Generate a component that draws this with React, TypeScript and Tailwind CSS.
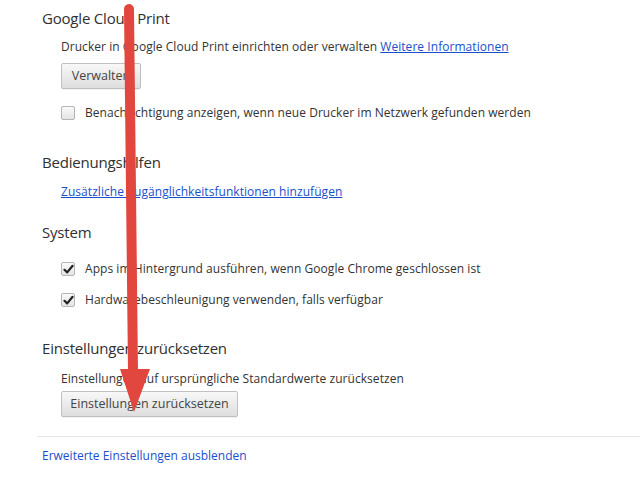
import React from "react";

function Checkbox({ checked }: { checked?: boolean }) {
  return (
    <div className="relative w-[14px] h-[14px] shrink-0 rounded-[2px] border border-[#b5b5b5] bg-gradient-to-b from-[#fafafa] to-[#e4e4e4]">
      {checked && (
        <svg className="absolute left-[1px] top-[1px]" width="11" height="11" viewBox="0 0 11 11">
          <path d="M1.5 5.8 L4.2 8.4 L9.6 1.8" fill="none" stroke="#222" strokeWidth="2.2" strokeLinecap="round" strokeLinejoin="round" />
        </svg>
      )}
    </div>
  );
}

function Button({ children, w }: { children: React.ReactNode; w: string }) {
  return (
    <div className={`${w} h-[26px] flex items-center justify-center rounded-[2px] border border-[#c0c0c0] bg-gradient-to-b from-[#f8f8f8] to-[#dedede] text-[12.5px] text-[#444] shadow-[0_1px_0_rgba(0,0,0,0.06)]`}>
      {children}
    </div>
  );
}

export default function App() {
  return (
    <div className="relative w-[640px] h-[485px] bg-white overflow-hidden text-[#333]" style={{ fontFamily: '"Open Sans", "Noto Sans", sans-serif' }}>
      <div className="pl-[42px] pt-[7px]">
        <div className="text-[15px] leading-[22px] tracking-[-0.2px] text-[#303030]">Google Cloud Print</div>
        <div className="pl-[19px]">
          <div className="mt-[10px] text-[12px] leading-[16px] tracking-[0.05px]">
            Drucker in Google Cloud Print einrichten oder verwalten{" "}
            <span className="text-[#1a4fcc] underline">Weitere Informationen</span>
          </div>
          <div className="mt-[8px]">
            <Button w="w-[80px]">Verwalten</Button>
          </div>
          <div className="mt-[16px] flex items-center gap-[10px] text-[12px] leading-[16px] tracking-[0.05px]">
            <Checkbox />
            <span>Benachrichtigung anzeigen, wenn neue Drucker im Netzwerk gefunden werden</span>
          </div>
        </div>

        <div className="mt-[30px] text-[15px] leading-[22px] tracking-[-0.2px] text-[#303030]">Bedienungshilfen</div>
        <div className="pl-[19px] mt-[11px] text-[12px] leading-[16px] tracking-[0.05px]">
          <span className="text-[#1a4fcc] underline">Zusätzliche Zugänglichkeitsfunktionen hinzufügen</span>
        </div>

        <div className="mt-[21px] text-[15px] leading-[22px] tracking-[-0.2px] text-[#303030]">System</div>
        <div className="pl-[19px]">
          <div className="mt-[18px] flex items-center gap-[10px] text-[12px] leading-[16px] tracking-[0.05px]">
            <Checkbox checked />
            <span>Apps im Hintergrund ausführen, wenn Google Chrome geschlossen ist</span>
          </div>
          <div className="mt-[15px] flex items-center gap-[10px] text-[12px] leading-[16px] tracking-[0.05px]">
            <Checkbox checked />
            <span>Hardwarebeschleunigung verwenden, falls verfügbar</span>
          </div>
        </div>

        <div className="mt-[29px] text-[15px] leading-[22px] tracking-[-0.2px] text-[#303030]">Einstellungen zurücksetzen</div>
        <div className="pl-[19px]">
          <div className="mt-[12px] text-[12px] leading-[16px] tracking-[0.05px]">
            Einstellungen auf ursprüngliche Standardwerte zurücksetzen
          </div>
          <div className="mt-[4px]">
            <Button w="w-[177px]">Einstellungen zurücksetzen</Button>
          </div>
        </div>
      </div>
      <div className="ml-[37px] mt-[19px] h-px bg-[#e6e6e6]" />
      <div className="pl-[42px] mt-[11px] text-[12px] leading-[16px] text-[#1a4fcc]">
        Erweiterte Einstellungen ausblenden
      </div>

      <svg className="absolute left-0 top-0 pointer-events-none" width="640" height="485" viewBox="0 0 640 485">
        <line x1="129" y1="9" x2="133" y2="372" stroke="#e2473f" strokeWidth="10" strokeLinecap="round" />
        <polygon points="120,369 150,369 134,412" fill="#e2473f" />
      </svg>
    </div>
  );
}
